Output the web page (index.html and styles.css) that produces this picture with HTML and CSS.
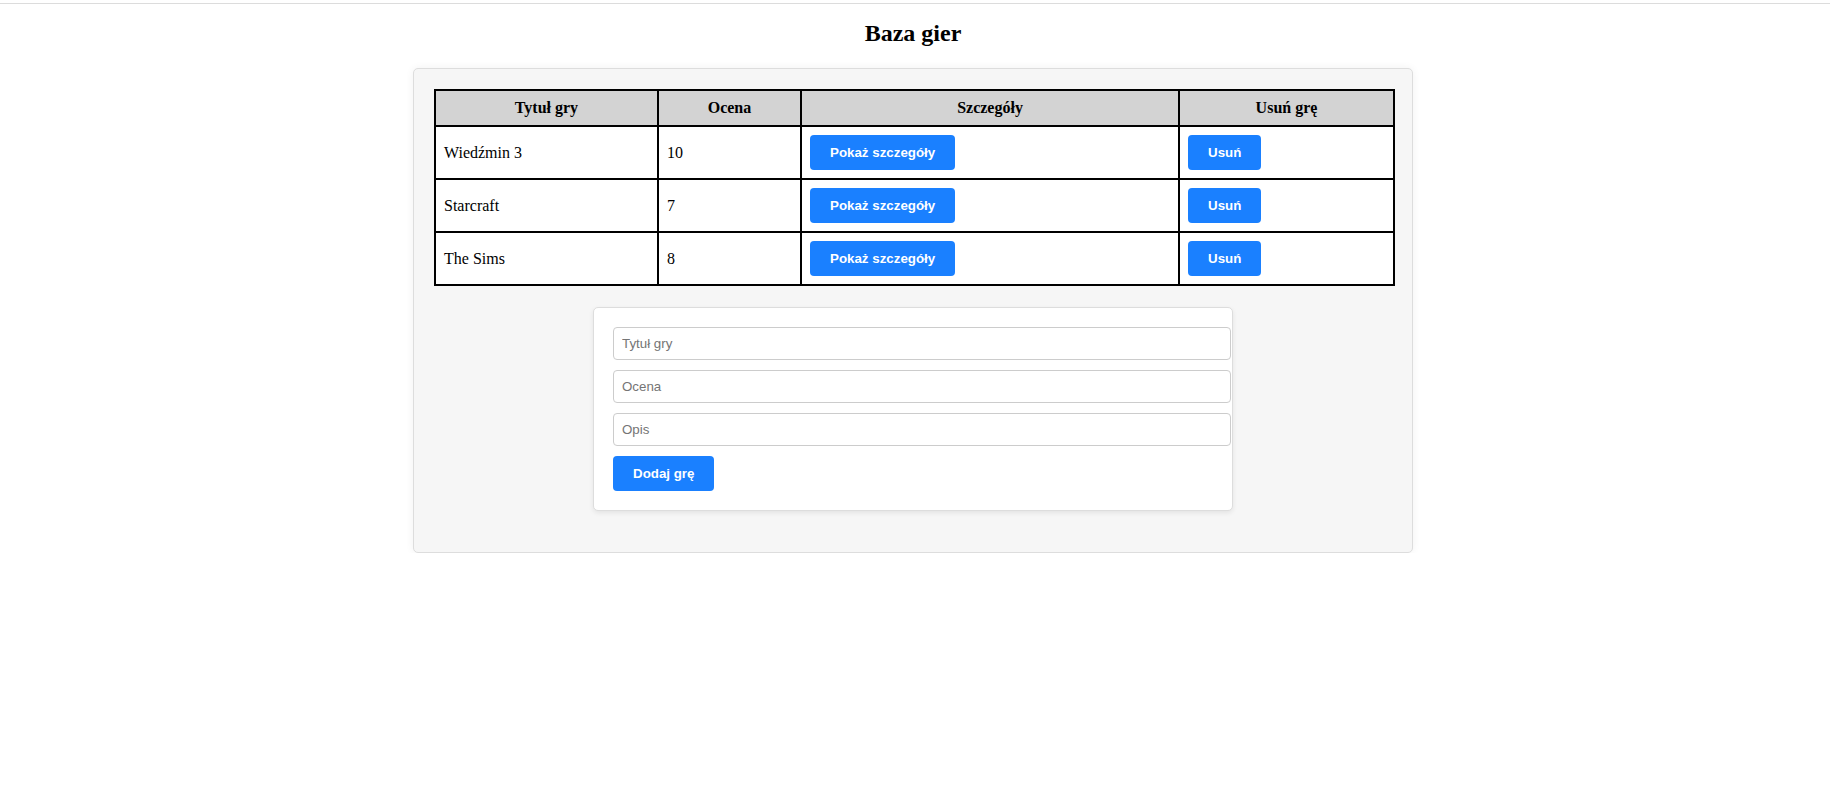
FILE: index.html
```html
<!DOCTYPE html>
<html lang="pl">
<head>
<meta charset="utf-8">
<title>Baza gier</title>
<link rel="stylesheet" href="styles.css">
</head>
<body>
<div class="topline"></div>
<h2 class="title">Baza gier</h2>
<div class="container">
  <table class="games">
    <colgroup>
      <col class="c1"><col class="c2"><col class="c3"><col class="c4">
    </colgroup>
    <thead>
      <tr><th>Tytuł gry</th><th>Ocena</th><th>Szczegóły</th><th>Usuń grę</th></tr>
    </thead>
    <tbody>
      <tr><td>Wiedźmin 3</td><td>10</td><td><button class="btn">Pokaż szczegóły</button></td><td><button class="btn">Usuń</button></td></tr>
      <tr><td>Starcraft</td><td>7</td><td><button class="btn">Pokaż szczegóły</button></td><td><button class="btn">Usuń</button></td></tr>
      <tr><td>The Sims</td><td>8</td><td><button class="btn">Pokaż szczegóły</button></td><td><button class="btn">Usuń</button></td></tr>
    </tbody>
  </table>
  <form class="card">
    <input class="field" type="text" placeholder="Tytuł gry">
    <input class="field" type="text" placeholder="Ocena">
    <input class="field" type="text" placeholder="Opis">
    <button class="btn" type="button">Dodaj grę</button>
  </form>
</div>
</body>
</html>
```

FILE: styles.css
```css
html, body {
  margin: 0;
  padding: 0;
  background: #ffffff;
}

body {
  padding-right: 4px;
  font-family: "Liberation Serif", "Times New Roman", serif;
  color: #000;
}

.topline {
  height: 3px;
  border-bottom: 1px solid #dcdcdc;
  margin-right: -4px;
}

.title {
  margin: 16px 0 21px;
  text-align: center;
  font-size: 24px;
  font-weight: bold;
}

.container {
  box-sizing: border-box;
  width: 1000px;
  margin: 0 auto;
  padding: 20px 20px 21px;
  background: #f6f6f6;
  border: 1px solid #dddddd;
  border-radius: 5px;
  box-shadow: 0 0 8px rgba(0, 0, 0, 0.06);
}

.games {
  width: 959px;
  table-layout: fixed;
  border-collapse: collapse;
  margin: 0 0 21px;
  font-size: 16px;
}

.c1 { width: 223px; }
.c2 { width: 143px; }
.c3 { width: 378px; }
.c4 { width: 215px; }

.games th,
.games td {
  border: 2px solid #000;
  padding: 8px;
}

.games th {
  background: #d3d3d3;
  font-weight: bold;
  text-align: center;
}

.games td {
  background: #ffffff;
  text-align: left;
}

.btn {
  font-family: "Liberation Sans", Arial, sans-serif;
  font-size: 13.33px;
  font-weight: bold;
  color: #ffffff;
  background: #1a80ff;
  border: none;
  border-radius: 4px;
  padding: 10px 20px;
  line-height: 15px;
  cursor: pointer;
  vertical-align: middle;
}

.card {
  box-sizing: border-box;
  width: 640px;
  margin: 0 auto 20px;
  padding: 19px;
  background: #ffffff;
  border: 1px solid #dddddd;
  border-radius: 5px;
  box-shadow: 0 2px 5px rgba(0, 0, 0, 0.08);
}

.field {
  display: block;
  width: 100%;
  margin: 0 0 10px;
  padding: 8px;
  border: 1px solid #cccccc;
  border-radius: 4px;
  font-family: "Liberation Sans", Arial, sans-serif;
  font-size: 13.33px;
  line-height: 15px;
  color: #000;
  background: #fff;
}

.field::placeholder {
  color: #757575;
}
```
